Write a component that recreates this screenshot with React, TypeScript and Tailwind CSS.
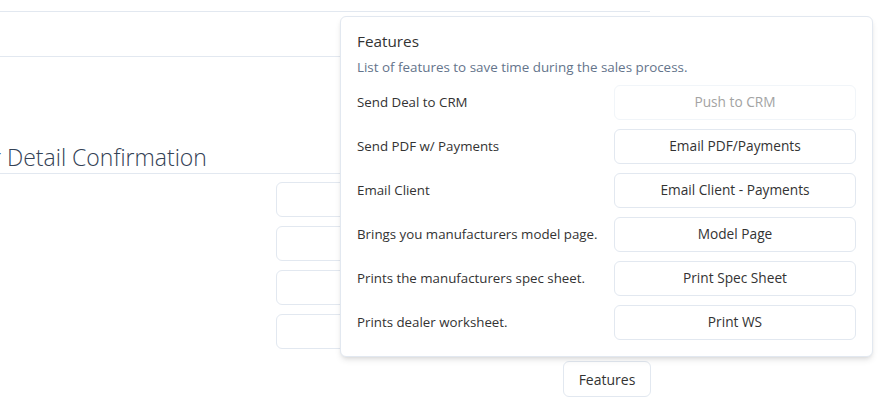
import React from 'react'

const features = [
  { label: 'Send Deal to CRM', action: 'Push to CRM', disabled: true },
  { label: 'Send PDF w/ Payments', action: 'Email PDF/Payments' },
  { label: 'Email Client', action: 'Email Client - Payments' },
  { label: 'Brings you manufacturers model page.', action: 'Model Page' },
  { label: 'Prints the manufacturers spec sheet.', action: 'Print Spec Sheet' },
  { label: 'Prints dealer worksheet.', action: 'Print WS' },
]

function FeaturesPopover() {
  return (
    <div className="absolute left-[340px] top-4 w-[533px] rounded-md border border-slate-200 bg-white px-4 pt-[13px] pb-4 shadow-md">
      <h3 className="text-[15.3px] leading-[22px] text-[#333]">Features</h3>
      <p className="mt-[5px] text-[13.4px] leading-5 text-[#64748b]">
        List of features to save time during the sales process.
      </p>
      <div className="mt-2 flex flex-col gap-[9px]">
        {features.map(({ label, action, disabled }) => (
          <div key={action} className="flex items-center justify-between">
            <span className="text-[13.3px] text-[#333]">{label}</span>
            <button
              disabled={disabled}
              className={
                disabled
                  ? 'h-[35px] w-[242px] rounded-md border border-slate-100 bg-white text-[13.7px] text-[#a3a3a3]'
                  : 'h-[35px] w-[242px] rounded-md border border-slate-200 bg-white text-[13.7px] text-[#333]'
              }
            >
              {action}
            </button>
          </div>
        ))}
      </div>
    </div>
  )
}

export default function App() {
  return (
    <div
      className="relative h-[403px] w-[888px] overflow-hidden bg-white"
      style={{ fontFamily: '"Open Sans", "Noto Sans", sans-serif' }}
    >
      <div className="w-[650px]">
        <div className="h-[12px] border-b border-slate-200" />
        <div className="h-[45px] border-b border-slate-200" />
        <div className="mt-[85px] h-[32px] overflow-hidden border-b border-slate-200">
          <h2 className="-ml-[8px] whitespace-nowrap text-[23px] font-light leading-[30px] text-[#334155]">
            r Detail Confirmation
          </h2>
        </div>
        <div className="ml-[276px] mt-2 flex w-[100px] flex-col gap-[9px]">
          {[0, 1, 2, 3].map((i) => (
            <div key={i} className="h-[35px] rounded-md border border-slate-200 bg-white" />
          ))}
        </div>
        <div className="ml-[563px] mt-3">
          <button className="h-[36px] w-[88px] rounded-md border border-slate-200 bg-white text-[14px] text-[#333]">
            Features
          </button>
        </div>
      </div>
      <FeaturesPopover />
    </div>
  )
}
